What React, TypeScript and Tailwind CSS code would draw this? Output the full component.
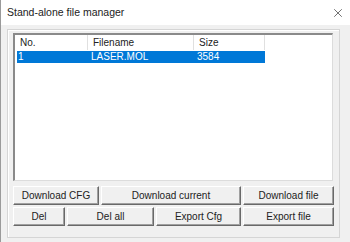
import { X } from 'lucide-react'

const COLUMNS = [
  { label: 'No.', width: 'w-[73px]' },
  { label: 'Filename', width: 'w-[106px]' },
  { label: 'Size', width: 'w-[71px]' },
]

function Btn({ label, className }: { label: string; className: string }) {
  return (
    <button
      type="button"
      className={`h-[19px] border border-t-white border-l-white border-r-[#696969] border-b-[#696969] bg-[#f0f0f0] text-[10px] leading-none text-[#222] shadow-[inset_-1px_-1px_0_#a0a0a0] ${className}`}
    >
      {label}
    </button>
  )
}

export default function App() {
  return (
    <div
      className="flex h-[242px] w-[350px] flex-col overflow-hidden border-l border-[#9a9a9a] bg-[#f0f0f0]"
      style={{ fontFamily: '"Liberation Sans", Arial, sans-serif' }}
    >
      {/* title bar */}
      <div className="flex h-[25px] shrink-0 items-center justify-between bg-white pl-[6px] pr-[5px]">
        <span className="text-[10.5px] text-[#222]">Stand-alone file manager</span>
        <X size={14} strokeWidth={1.1} className="text-[#222]" />
      </div>

      {/* group frame */}
      <div className="ml-[6px] mt-[4px] flex h-[209px] w-[333px] flex-col border border-[#d5d5d5] px-[5px] pt-[3px] shadow-[inset_1px_1px_0_#fff]">
        {/* list view */}
        <div className="flex h-[148px] w-[320px] flex-col border border-t-2 border-l-2 border-t-[#8a8a8a] border-l-[#8a8a8a] border-r-[#dcdcdc] border-b-[#dcdcdc] bg-white">
          <div className="flex h-[15px] shrink-0 text-[10px] leading-[15px] text-[#222]">
            {COLUMNS.map((c) => (
              <div key={c.label} className={`${c.width} border-r border-[#e0e0e0] pl-[5px]`}>
                {c.label}
              </div>
            ))}
          </div>
          <div className="ml-[2px] mt-[1px] flex h-[12px] w-[248px] bg-[#0078d7] text-[10px] leading-[12px] text-white">
            <div className="w-[71px] pl-[1px]">1</div>
            <div className="w-[106px] pl-[3px]">LASER.MOL</div>
            <div className="w-[71px] pl-[3px]">3584</div>
          </div>
        </div>

        {/* buttons */}
        <div className="mt-[5px] flex gap-[2px]">
          <Btn label="Download CFG" className="w-[86px]" />
          <Btn label="Download current" className="w-[140px]" />
          <Btn label="Download file" className="w-[91px]" />
        </div>
        <div className="mt-[2px] flex gap-[2px]">
          <Btn label="Del" className="w-[52px]" />
          <Btn label="Del all" className="w-[87px]" />
          <Btn label="Export Cfg" className="w-[85px]" />
          <Btn label="Export file" className="w-[91px]" />
        </div>
      </div>
    </div>
  )
}
